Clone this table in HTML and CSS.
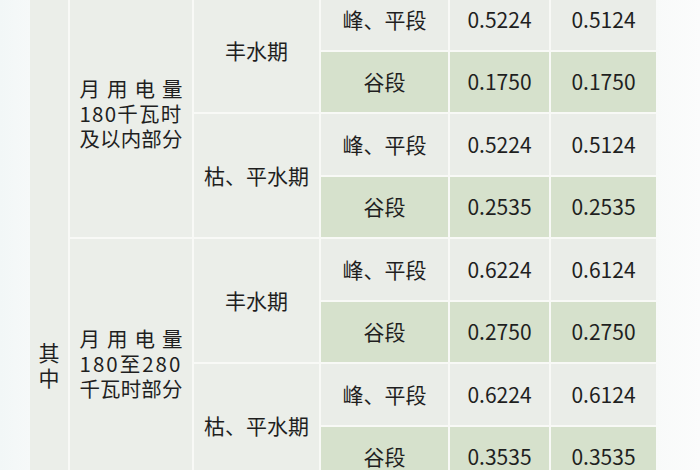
FILE: index.html
```html
<!DOCTYPE html>
<html lang="zh-CN">
<head>
<meta charset="utf-8">
<title>电价表</title>
<link rel="stylesheet" href="styles.css">
</head>
<body>
<div class="page">
  <div class="table">
    <div class="cell c-side"><div class="vert"><span>其</span><span>中</span></div></div>

    <div class="cell c-tier"><div class="tier"><span class="jl">月用电量</span><span class="ls-a">180千瓦时</span><span class="jl">及以内部分</span></div></div>
    <div class="cell c-season">丰水期</div>
    <div class="cell">峰、平段</div><div class="cell">0.5224</div><div class="cell">0.5124</div>
    <div class="cell g">谷段</div><div class="cell g">0.1750</div><div class="cell g">0.1750</div>
    <div class="cell c-season">枯、平水期</div>
    <div class="cell">峰、平段</div><div class="cell">0.5224</div><div class="cell">0.5124</div>
    <div class="cell g">谷段</div><div class="cell g">0.2535</div><div class="cell g">0.2535</div>

    <div class="cell c-tier"><div class="tier"><span class="jl">月用电量</span><span class="ls-b">180至280</span><span class="jl">千瓦时部分</span></div></div>
    <div class="cell c-season">丰水期</div>
    <div class="cell">峰、平段</div><div class="cell">0.6224</div><div class="cell">0.6124</div>
    <div class="cell g">谷段</div><div class="cell g">0.2750</div><div class="cell g">0.2750</div>
    <div class="cell c-season">枯、平水期</div>
    <div class="cell">峰、平段</div><div class="cell">0.6224</div><div class="cell">0.6124</div>
    <div class="cell g">谷段</div><div class="cell g">0.3535</div><div class="cell g">0.3535</div>
  </div>
</div>
</body>
</html>
```

FILE: styles.css
```css
html, body {
  margin: 0;
  padding: 0;
}
body {
  width: 700px;
  height: 470px;
  overflow: hidden;
  background: linear-gradient(90deg, #f2f7f7 0px, #f6f9f9 30px, #f8faf9 656px, #fbfcfc 700px);
  font-family: "Noto Sans CJK SC", "Noto Sans", sans-serif;
  color: #1f1f1f;
}
.page {
  padding-left: 30px;
  margin-top: -11px;
}
.table {
  display: grid;
  width: 626px;
  grid-template-columns: 38px 122px 125px 127px 99px 105px;
  grid-template-rows: repeat(8, 60.5px);
  gap: 2px;
  background: #f8f9f6;
}
.cell {
  background: #eaede8;
  display: flex;
  align-items: center;
  justify-content: center;
  font-size: 21px;
  line-height: 1;
  white-space: nowrap;
}
.cell.g {
  background: #d6e1cc;
}
.c-side {
  grid-row: span 8;
  background: #ebeee9;
  align-items: flex-start;
  padding-top: 351px;
}
.vert {
  display: flex;
  flex-direction: column;
  align-items: center;
  font-size: 21px;
  line-height: 25px;
}
.c-tier {
  grid-row: span 4;
  background: #ebeee9;
}
.c-season {
  grid-row: span 2;
  background: #ebeee9;
}
.tier {
  display: flex;
  flex-direction: column;
  width: 103px;
  font-size: 20.5px;
  line-height: 25px;
}
.jl {
  display: block;
  text-align: justify;
  text-align-last: justify;
}
.ls-a {
  letter-spacing: 1.2px;
}
.ls-b {
  letter-spacing: 2px;
}
```
